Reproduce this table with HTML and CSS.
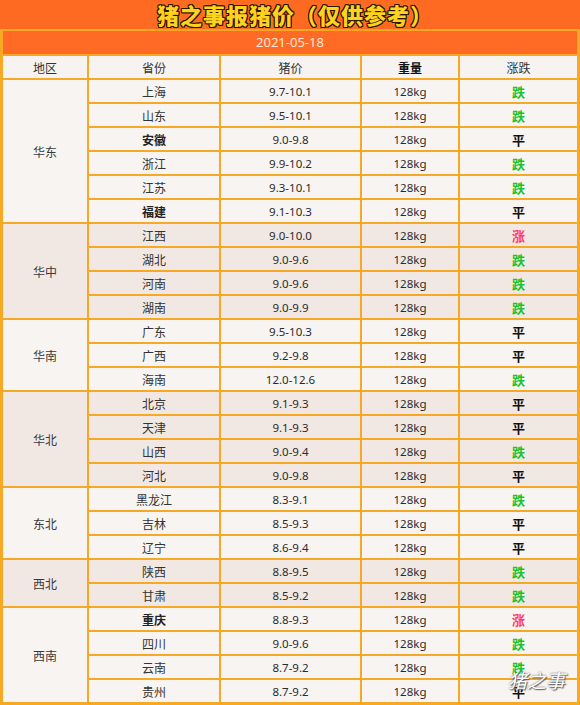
FILE: index.html
```html
<!DOCTYPE html>
<html lang="zh">
<head>
<meta charset="utf-8">
<title>猪之事报猪价</title>
<link rel="stylesheet" href="styles.css">
</head>
<body>
<div class="page">
  <div class="title">猪之事报猪价（仅供参考）</div>
  <div class="board">
    <div class="date">2021-05-18</div>
    <div class="grid head">
      <div class="cell">地区</div>
      <div class="cell">省份</div>
      <div class="cell">猪价</div>
      <div class="cell strong">重量</div>
      <div class="cell">涨跌</div>
    </div>

    <div class="grid">
      <div class="cell region s6">华东</div>
      <div class="cell">上海</div><div class="cell num">9.7-10.1</div><div class="cell num">128kg</div><div class="cell down">跌</div>
      <div class="cell">山东</div><div class="cell num">9.5-10.1</div><div class="cell num">128kg</div><div class="cell down">跌</div>
      <div class="cell bold">安徽</div><div class="cell num">9.0-9.8</div><div class="cell num">128kg</div><div class="cell flat">平</div>
      <div class="cell">浙江</div><div class="cell num">9.9-10.2</div><div class="cell num">128kg</div><div class="cell down">跌</div>
      <div class="cell">江苏</div><div class="cell num">9.3-10.1</div><div class="cell num">128kg</div><div class="cell down">跌</div>
      <div class="cell bold">福建</div><div class="cell num">9.1-10.3</div><div class="cell num">128kg</div><div class="cell flat">平</div>
    </div>

    <div class="grid alt">
      <div class="cell region s4">华中</div>
      <div class="cell">江西</div><div class="cell num">9.0-10.0</div><div class="cell num">128kg</div><div class="cell up">涨</div>
      <div class="cell">湖北</div><div class="cell num">9.0-9.6</div><div class="cell num">128kg</div><div class="cell down">跌</div>
      <div class="cell">河南</div><div class="cell num">9.0-9.6</div><div class="cell num">128kg</div><div class="cell down">跌</div>
      <div class="cell">湖南</div><div class="cell num">9.0-9.9</div><div class="cell num">128kg</div><div class="cell down">跌</div>
    </div>

    <div class="grid">
      <div class="cell region s3">华南</div>
      <div class="cell">广东</div><div class="cell num">9.5-10.3</div><div class="cell num">128kg</div><div class="cell flat">平</div>
      <div class="cell">广西</div><div class="cell num">9.2-9.8</div><div class="cell num">128kg</div><div class="cell flat">平</div>
      <div class="cell">海南</div><div class="cell num">12.0-12.6</div><div class="cell num">128kg</div><div class="cell down">跌</div>
    </div>

    <div class="grid alt">
      <div class="cell region s4">华北</div>
      <div class="cell">北京</div><div class="cell num">9.1-9.3</div><div class="cell num">128kg</div><div class="cell flat">平</div>
      <div class="cell">天津</div><div class="cell num">9.1-9.3</div><div class="cell num">128kg</div><div class="cell flat">平</div>
      <div class="cell">山西</div><div class="cell num">9.0-9.4</div><div class="cell num">128kg</div><div class="cell down">跌</div>
      <div class="cell">河北</div><div class="cell num">9.0-9.8</div><div class="cell num">128kg</div><div class="cell flat">平</div>
    </div>

    <div class="grid">
      <div class="cell region s3">东北</div>
      <div class="cell">黑龙江</div><div class="cell num">8.3-9.1</div><div class="cell num">128kg</div><div class="cell down">跌</div>
      <div class="cell">吉林</div><div class="cell num">8.5-9.3</div><div class="cell num">128kg</div><div class="cell flat">平</div>
      <div class="cell">辽宁</div><div class="cell num">8.6-9.4</div><div class="cell num">128kg</div><div class="cell flat">平</div>
    </div>

    <div class="grid alt">
      <div class="cell region s2">西北</div>
      <div class="cell">陕西</div><div class="cell num">8.8-9.5</div><div class="cell num">128kg</div><div class="cell down">跌</div>
      <div class="cell">甘肃</div><div class="cell num">8.5-9.2</div><div class="cell num">128kg</div><div class="cell down">跌</div>
    </div>

    <div class="grid">
      <div class="cell region s4">西南</div>
      <div class="cell bold">重庆</div><div class="cell num">8.8-9.3</div><div class="cell num">128kg</div><div class="cell up">涨</div>
      <div class="cell">四川</div><div class="cell num">9.0-9.6</div><div class="cell num">128kg</div><div class="cell down">跌</div>
      <div class="cell">云南</div><div class="cell num">8.7-9.2</div><div class="cell num">128kg</div><div class="cell down">跌</div>
      <div class="cell">贵州</div><div class="cell num">8.7-9.2</div><div class="cell num">128kg</div><div class="cell flat">平</div>
    </div>
  </div>
  <div class="watermark">猪之事</div>
</div>
</body>
</html>
```
FILE: styles.css
```css
html, body {
  margin: 0;
  padding: 0;
  background: #ffffff;
}

.page {
  position: relative;
  width: 580px;
  height: 705px;
  overflow: hidden;
  font-family: "Noto Sans", "Noto Sans CJK SC", sans-serif;
  color: #2a2a2a;
}

.title {
  height: 29px;
  line-height: 29px;
  background: #ff6a22;
  text-align: center;
  padding-left: 10px;
  font-family: "Noto Sans CJK SC", sans-serif;
  font-size: 22px;
  font-weight: 900;
  color: #ffd21e;
  letter-spacing: 1px;
  text-shadow:
    -1px -1px 0 #2a1500, 1px -1px 0 #2a1500, -1px 1px 0 #2a1500, 1px 1px 0 #2a1500,
    0 -1px 0 #2a1500, 0 1px 0 #2a1500, -1px 0 0 #2a1500, 1px 0 0 #2a1500,
    0 0 3px #ffb300;
}

.board {
  display: flex;
  flex-direction: column;
  gap: 2px;
  padding: 2px 3px 3px 3px;
  background: #f7a824;
}

.date {
  height: 23px;
  line-height: 23px;
  background: #ff6a25;
  color: #ffe9da;
  text-align: center;
  font-size: 13px;
}

.grid {
  --bg: #f8f4f2;
  display: grid;
  grid-template-columns: 84px 130px 139px 96px 117px;
  grid-auto-rows: 22px;
  gap: 2px;
}

.grid.alt {
  --bg: #f1e8e4;
}

.grid.head {
  --bg: #f6f3f1;
}

.cell {
  background: var(--bg);
  display: flex;
  align-items: center;
  justify-content: center;
  font-size: 12px;
  color: #333333;
  font-family: "Noto Sans CJK SC", sans-serif;
}

.cell.num {
  font-family: "Noto Sans", "Noto Sans CJK SC", sans-serif;
  font-size: 11.5px;
  color: #2b2b2b;
}

.cell.bold {
  font-weight: 700;
  color: #222222;
}

.cell.strong {
  font-weight: 700;
  color: #111111;
}

.region {
  color: #3a3a3a;
}

.s2 { grid-row: span 2; }
.s3 { grid-row: span 3; }
.s4 { grid-row: span 4; }
.s6 { grid-row: span 6; }

.down {
  color: #1fc21f;
  font-weight: 700;
  font-size: 13px;
}

.flat {
  color: #111111;
  font-weight: 700;
  font-size: 13px;
}

.up {
  color: #ff3a5c;
  font-weight: 700;
  font-size: 13px;
}

.watermark {
  position: absolute;
  left: 508px;
  top: 666px;
  font-family: "Noto Sans CJK SC", sans-serif;
  font-size: 19px;
  font-style: italic;
  color: #ffffff;
  text-shadow: 0 0 2px #555555, 1px 1px 1px #666666;
}
```
